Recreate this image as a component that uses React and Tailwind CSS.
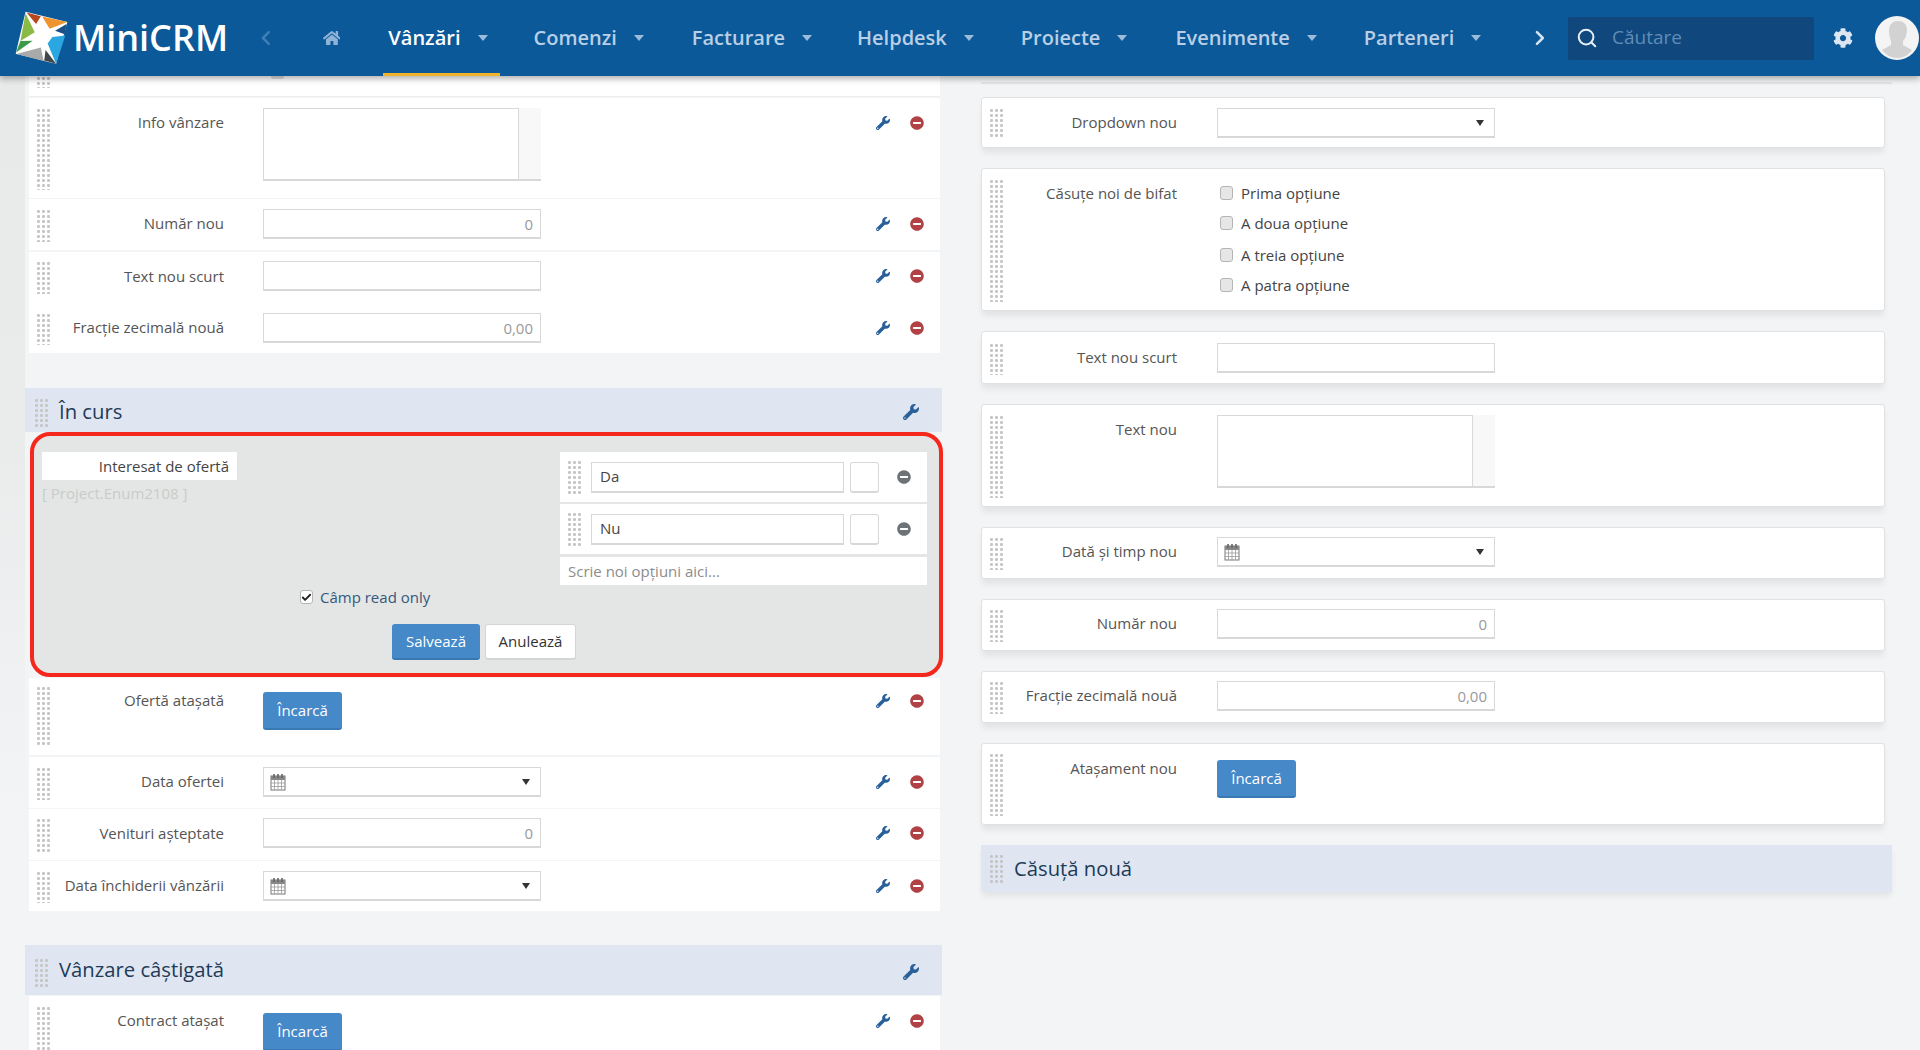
import React from "react";
import { FaWrench, FaMinusCircle, FaHome, FaCog } from "react-icons/fa";
import { ChevronLeft, ChevronRight, Search, Check } from "lucide-react";

const font = { fontFamily: '"Open Sans", "Noto Sans", sans-serif' };

function Grip({ className = "" }) {
  return (
    <div
      className={
        "-ml-[1px] mr-[1px] w-[15px] shrink-0 bg-[radial-gradient(circle,#c6c6c6_1.3px,transparent_1.7px)] bg-[length:5px_5px] " +
        className
      }
    />
  );
}

function Calendar() {
  return (
    <svg width="16" height="18" viewBox="0 0 16 18" className="ml-[6px]">
      <rect x="1" y="3" width="14" height="14" fill="#fff" stroke="#777" strokeWidth="1" />
      <rect x="1" y="3" width="14" height="4" fill="#888" />
      <path d="M4 1v4M8 1v4M12 1v4" stroke="#666" strokeWidth="1.6" />
      <path d="M1 10h14M1 13.5h14M4.5 7v10M8 7v10M11.5 7v10" stroke="#999" strokeWidth="0.8" />
    </svg>
  );
}

function Caret({ className = "" }) {
  return <span className={"h-0 w-0 border-x-transparent " + className} />;
}

function TextField({ value = "" }) {
  return (
    <input
      readOnly
      placeholder={value}
      className="block h-[30px] w-[278px] border border-b-2 border-[#d8d8d8] bg-white px-[7px] text-right text-[15px] text-[#999] placeholder:text-[#9a9a9a] outline-none"
      style={font}
    />
  );
}

function SelectField({ calendar }) {
  return (
    <div className="flex h-[30px] w-[278px] items-center justify-between border border-b-2 border-[#d8d8d8] bg-white pr-[10px]">
      {calendar ? <Calendar /> : <span />}
      <Caret className="border-x-[4px] border-t-[6px] border-t-[#333]" />
    </div>
  );
}

function TextArea() {
  return (
    <div className="flex h-[73px] w-[278px] border-b-2 border-[#d8d8d8] bg-[#f8f8f8]">
      <div className="w-[256px] border border-b-0 border-[#d8d8d8] bg-white" />
      <div className="flex-1" />
    </div>
  );
}

function Upload() {
  return (
    <button
      className="block h-[38px] w-[79px] rounded-[3px] border-b-2 border-[#3a78b3] bg-[#4589c9] text-center text-[15px] text-white"
      style={font}
    >
      Încarcă
    </button>
  );
}

function RowActions() {
  return (
    <div className="ml-auto flex h-[30px] items-center pr-[16px]">
      <FaWrench className="h-[14px] w-[14px] text-[#2a609a]" />
      <FaMinusCircle className="ml-[20px] h-[14px] w-[14px] text-[#b04144]" />
    </div>
  );
}

function Row({ label, className, children, labelClass = "leading-[28px]" }) {
  return (
    <div className={"flex w-[911px] bg-white pb-[8px] pl-[8px] " + className}>
      <Grip className="self-stretch" />
      <div className={"w-[172px] shrink-0 text-right text-[15px] text-[#555] " + labelClass}>{label}</div>
      <div className="ml-[39px] w-[278px]">{children}</div>
      <RowActions />
    </div>
  );
}

function Card({ label, className, children, labelClass = "leading-[28px]" }) {
  return (
    <div className={"flex w-[904px] rounded-[3px] border border-[#dfe1e2] bg-white pb-[8px] pl-[8px] shadow-[0_6px_6px_-1px_rgba(0,0,0,0.07)] " + className}>
      <Grip className="self-stretch" />
      <div className={"w-[172px] shrink-0 text-right text-[15px] text-[#555] " + labelClass}>{label}</div>
      <div className="ml-[40px]">{children}</div>
    </div>
  );
}

function SectionHead({ title, className, textClass = "" }) {
  return (
    <div className={"flex w-[917px] items-center bg-[#dfe6f2] pl-[10px] pr-[23px] pt-[4px] " + className}>
      <Grip className="h-[29px]" />
      <div className={"ml-[9px] text-[20.25px] text-[#1d3a57] " + textClass}>{title}</div>
      <FaWrench className="ml-auto h-[16px] w-[16px] text-[#2a609a]" />
    </div>
  );
}

function Box() {
  return <span className="block h-[14px] w-[13px] rounded-[3px] border border-[#b5b5b5] bg-[#e6e6e6]" />;
}

function CheckItem({ label, className = "" }) {
  return (
    <div className={"flex h-[30px] items-center text-[15px] text-[#444] " + className}>
      <Box />
      <span className="ml-[8px]">{label}</span>
    </div>
  );
}

function OptionRow({ value, className = "" }) {
  return (
    <div className={"flex h-[50px] items-center bg-white pl-[8px] " + className}>
      <Grip className="h-[34px]" />
      <div className="ml-[8px] flex h-[31px] w-[253px] items-center border border-b-2 border-[#d8d8d8] bg-white px-[8px] text-[15px] text-[#444]">
        {value}
      </div>
      <div className="ml-[6px] h-[31px] w-[29px] rounded-[3px] border border-b-2 border-[#d8d8d8] bg-white" />
      <FaMinusCircle className="ml-[18px] h-[14px] w-[14px] text-[#6c7276]" />
    </div>
  );
}

function Logo() {
  return (
    <svg width="53" height="54" viewBox="14 10 156 158" className="shrink-0">
      <polygon points="45,12 168,42 135,165 16,135" fill="#fff" />
      <polygon points="48,14 90,25 76,48" fill="#b8471e" />
      <polygon points="94,26 168,42 116,62" fill="#ef9330" />
      <polygon points="132,68 166,48 160,78" fill="#1c4f86" />
      <polygon points="124,86 162,82 135,165 110,105" fill="#2aa7e0" />
      <polygon points="104,124 135,165 100,155" fill="#41474a" />
      <polygon points="18,136 90,117 98,155 130,165" fill="#a7aaa9" />
      <polygon points="45,16 72,72 30,98" fill="#8cbb45" />
      <polygon points="30,98 66,97 17,132" fill="#3f9a47" />
      <circle cx="97" cy="50" r="8" fill="#fff" />
    </svg>
  );
}

function Avatar() {
  return (
    <svg width="46" height="44" viewBox="0 0 46 44" className="shrink-0">
      <ellipse cx="23" cy="22" rx="22" ry="22" fill="#f4f4f4" />
      <path d="M15 15c0-7 4-10 9-10s9 3 9 9c0 5-2 9-4 11v4l9 5c-3 5-9 8-15 8s-11-3-15-8l9-5v-4c-1-3-2-6-2-10z" fill="#d2d2d2" />
    </svg>
  );
}

function NavItem({ label, active, className = "" }) {
  return (
    <div
      className={
        "flex h-full items-center border-b-[3px] pl-[5px] pr-[12px] pt-[2px] text-[20px] font-semibold " +
        (active ? "border-[#f0b42a] text-white " : "border-transparent text-[#b9cfe6] ") +
        className
      }
    >
      <span>{label}</span>
      <Caret className="ml-[17px] border-x-[5px] border-t-[6px] border-t-[#9dbcda]" />
    </div>
  );
}

function Nav() {
  return (
    <div className="relative z-10 flex h-[76px] items-center bg-[#0b5999] shadow-[0_3px_6px_rgba(0,0,0,0.3)]">
      <div className="flex w-[258px] items-center pl-[15px]">
        <Logo />
        <span className="ml-[5px] text-[36px] font-semibold leading-none text-white">MiniCRM</span>
      </div>
      <ChevronLeft className="-ml-[2px] h-[34px] w-[24px] text-[#3d7fb8]" strokeWidth={2.5} />
      <FaHome className="ml-[45px] h-[18px] w-[18px] text-[#8fb3d6]" />
      <NavItem label="Vânzări" active className="ml-[43px]" />
      <NavItem label="Comenzi" className="ml-[29px]" />
      <NavItem label="Facturare" className="ml-[31px]" />
      <NavItem label="Helpdesk" className="ml-[28px]" />
      <NavItem label="Proiecte" className="ml-[30px]" />
      <NavItem label="Evenimente" className="ml-[31px]" />
      <NavItem label="Parteneri" className="ml-[30px]" />
      <ChevronRight className="ml-[35px] h-[34px] w-[24px] text-[#d6e3f0]" strokeWidth={2.5} />
      <div className="ml-[16px] flex h-[43px] w-[246px] shrink-0 items-center rounded-[2px] bg-[#10477c] pl-[8px]">
        <Search className="h-[22px] w-[22px] text-[#e6eef6]" strokeWidth={2.2} />
        <input
          readOnly
          placeholder="Căutare"
          className="-mt-[1px] ml-[14px] w-[180px] bg-transparent text-[19px] text-white outline-none placeholder:text-[#5f8db8]"
          style={font}
        />
      </div>
      <FaCog className="ml-[19px] h-[20px] w-[20px] shrink-0 text-[#dbe6f2]" />
      <div className="ml-[21px]">
        <Avatar />
      </div>
    </div>
  );
}

function Editor() {
  return (
    <div className="ml-[5px] h-[245px] w-[913px] rounded-[20px] border-[4px] border-[#f4281c] bg-[#e4e6e5] pt-[16px]">
      <div className="flex justify-between pl-[8px] pr-[12px]">
        <div>
          <div className="flex h-[28px] w-[195px] items-center justify-end bg-white pr-[8px] text-[15px] text-[#444]">
            Interesat de ofertă
          </div>
          <div className="mt-[2px] text-[15px] leading-[22px] text-[#c9cbca]">[ Project.Enum2108 ]</div>
        </div>
        <div className="w-[367px]">
          <OptionRow value="Da" />
          <OptionRow value="Nu" className="mt-[2px]" />
          <input
            readOnly
            placeholder="Scrie noi opțiuni aici..."
            className="mt-[3px] block h-[28px] w-[367px] bg-white px-[8px] text-[15px] outline-none placeholder:text-[#8c8c8c]"
            style={font}
          />
        </div>
      </div>
      <div className="ml-[266px] mt-[1px] flex items-center text-[15px] text-[#34587c]">
        <span className="flex h-[14px] w-[13px] items-center justify-center rounded-[3px] border border-[#b5b5b5] bg-white">
          <Check className="h-[11px] w-[11px] text-[#222]" strokeWidth={4} />
        </span>
        <span className="ml-[7px]">Câmp read only</span>
      </div>
      <div className="ml-[358px] mt-[15px] flex gap-[5px]">
        <button className="h-[36px] w-[88px] rounded-[3px] border-b-2 border-[#3a78b3] bg-[#4589c9] pt-[2px] text-[15px] text-white">
          Salvează
        </button>
        <button className="h-[36px] w-[91px] rounded-[3px] border border-b-2 border-[#d5d5d5] bg-white pt-[1px] text-[15px] text-[#333]">
          Anulează
        </button>
      </div>
    </div>
  );
}

export default function App() {
  return (
    <div className="h-[1050px] w-[1920px] overflow-hidden bg-[#f2f4f6]" style={font}>
      <Nav />
      <div className="flex">
        <div className="h-[760px] w-[25px] bg-gradient-to-b from-[#e8eaea] via-[#eaecec] to-[#f2f4f6]" />
        <div className="w-[917px]">
          <div className="ml-[4px] flex h-[21px] w-[911px] border-b border-[#eeeeee] bg-white pl-[8px]">
            <Grip className="h-[12px]" />
            <span className="-mt-[10px] ml-[219px] block h-[13px] w-[13px] rounded-[2px] bg-[#dddddd]" />
          </div>
          <div className="ml-[4px] mt-[1px]">
            <Row label="Info vânzare" className="h-[100px] pt-[10px]">
              <TextArea />
            </Row>
            <Row label="Număr nou" className="mt-[1px] h-[51px] pt-[10px]">
              <TextField value="0" />
            </Row>
            <Row label="Text nou scurt" className="mt-[2px] h-[50px] pt-[9px]" labelClass="leading-[30px]">
              <TextField />
            </Row>
            <Row label="Fracție zecimală nouă" className="h-[51px] pt-[11px]">
              <TextField value="0,00" />
            </Row>
          </div>
          <SectionHead title="În curs" className="mt-[35px] h-[44px]" textClass="-mt-[1px]" />
          <Editor />
          <div className="ml-[4px]">
            <Row label="Ofertă atașată" className="mt-[1px] h-[77px] pt-[8px]">
              <div className="mt-[6px]">
                <Upload />
              </div>
            </Row>
            <Row label="Data ofertei" className="mt-[2px] h-[51px] pt-[10px]">
              <SelectField calendar />
            </Row>
            <Row label="Venituri așteptate" className="mt-[1px] h-[51px] pt-[9px]" labelClass="leading-[30px]">
              <TextField value="0" />
            </Row>
            <Row label="Data închiderii vânzării" className="mt-[1px] h-[50px] pt-[10px]">
              <SelectField calendar />
            </Row>
          </div>
          <SectionHead title="Vânzare câștigată" className="mt-[34px] h-[50px]" textClass="-mt-[6px]" />
          <div className="ml-[4px] mt-[1px]">
            <Row label="Contract atașat" className="h-[100px] pt-[10px]">
              <div className="mt-[7px]">
                <Upload />
              </div>
            </Row>
          </div>
        </div>
        <div className="ml-[39px] w-[911px]">
          <div className="mb-[13px] h-[8px] w-[911px] border-b-2 border-[#e2e4e6]" />
          <div className="flex flex-col gap-[20px]">
            <Card label="Dropdown nou" className="h-[51px] pt-[10px]">
              <SelectField />
            </Card>
            <Card label="Căsuțe noi de bifat" className="h-[143px] pt-[10px]">
              <div className="-mt-[1px] pl-[3px]">
                <CheckItem label="Prima opțiune" />
                <CheckItem label="A doua opțiune" />
                <CheckItem label="A treia opțiune" className="mt-[2px]" />
                <CheckItem label="A patra opțiune" />
              </div>
            </Card>
            <Card label="Text nou scurt" className="h-[53px] pt-[11px]">
              <TextField />
            </Card>
            <Card label="Text nou" className="h-[103px] pt-[10px]">
              <TextArea />
            </Card>
            <Card label="Dată și timp nou" className="h-[52px] pt-[9px]">
              <SelectField calendar />
            </Card>
            <Card label="Număr nou" className="h-[52px] pt-[9px]">
              <TextField value="0" />
            </Card>
            <Card label="Fracție zecimală nouă" className="h-[52px] pt-[9px]">
              <TextField value="0,00" />
            </Card>
            <Card label="Atașament nou" className="h-[82px] pt-[9px]" labelClass="leading-[30px]">
              <div className="mt-[7px]">
                <Upload />
              </div>
            </Card>
            <div className="flex h-[47px] w-[911px] items-center bg-[#dfe6f2] pl-[9px] shadow-[0_5px_6px_-1px_rgba(0,0,0,0.07)]">
              <Grip className="h-[29px]" />
              <div className="ml-[9px] text-[20.25px] text-[#1d3a57]">Căsuță nouă</div>
            </div>
          </div>
        </div>
      </div>
    </div>
  );
}
